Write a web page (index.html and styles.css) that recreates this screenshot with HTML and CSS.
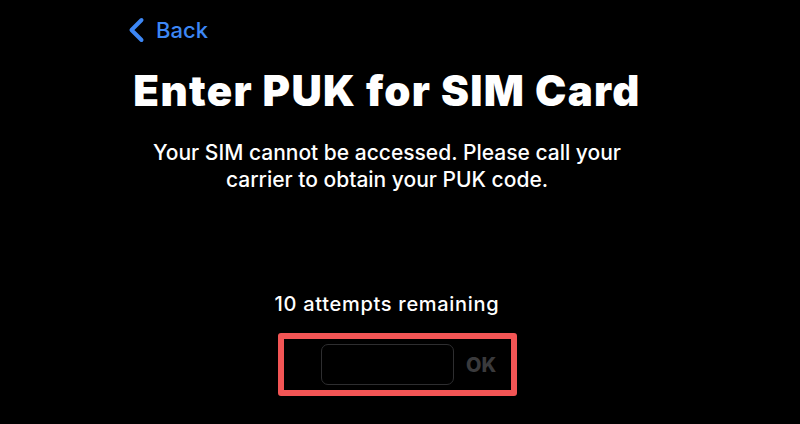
FILE: index.html
```html
<!DOCTYPE html>
<html lang="en">
<head>
<meta charset="utf-8">
<title>Enter PUK for SIM Card</title>
<link rel="stylesheet" href="styles.css">
</head>
<body>
<main class="screen">
  <nav class="nav">
    <a class="back" href="#">
      <svg class="chev" width="18" height="26" viewBox="0 0 18 26" aria-hidden="true">
        <path d="M14.5 3 L4.5 13 L14.5 23" fill="none" stroke="currentColor" stroke-width="4" stroke-linecap="round" stroke-linejoin="round"/>
      </svg>
      <span>Back</span>
    </a>
  </nav>
  <h1 class="title">Enter PUK for SIM Card</h1>
  <p class="desc">Your SIM cannot be accessed. Please call your<br>carrier to obtain your PUK code.</p>
  <p class="attempts">10 attempts remaining</p>
  <div class="entry">
    <div class="field"></div>
    <span class="ok">OK</span>
  </div>
</main>
</body>
</html>
```

FILE: styles.css
```css
html, body {
  margin: 0;
  padding: 0;
  background: #000;
}
body {
  width: 800px;
  height: 424px;
  overflow: hidden;
  font-family: Inter, "Noto Sans", "Liberation Sans", sans-serif;
  color: #fff;
}
.screen {
  width: 774px;
  display: flex;
  flex-direction: column;
  align-items: center;
}
.nav {
  align-self: stretch;
  padding: 17px 0 0 127px;
}
.back {
  display: inline-flex;
  align-items: center;
  gap: 11px;
  color: #3d87f5;
  text-decoration: none;
  font-size: 22px;
  line-height: 26px;
  font-weight: 500;
}
.chev {
  display: block;
}
.title {
  margin: 19px 0 0;
  font-size: 42px;
  line-height: 50px;
  font-weight: 900;
  letter-spacing: 1.3px;
  white-space: nowrap;
}
.desc {
  margin: 23px 0 0;
  font-size: 21px;
  line-height: 27px;
  font-weight: 500;
  text-align: center;
}
.attempts {
  margin: 99px 0 0;
  font-size: 20px;
  line-height: 24px;
  font-weight: 500;
  letter-spacing: 0.7px;
}
.entry {
  margin: 17px 0 0 21px;
  box-sizing: border-box;
  width: 239px;
  height: 63px;
  border: 6px solid #f25555;
  border-radius: 3px;
  padding: 5px 0 0 37px;
  display: flex;
  align-items: center;
}
.field {
  box-sizing: border-box;
  width: 133px;
  height: 41px;
  border: 1px solid #2e2e30;
  border-radius: 7px;
  align-self: flex-start;
}
.ok {
  margin-left: 12px;
  margin-top: -5px;
  font-size: 20px;
  font-weight: 800;
  color: #3a3a3c;
}
```
